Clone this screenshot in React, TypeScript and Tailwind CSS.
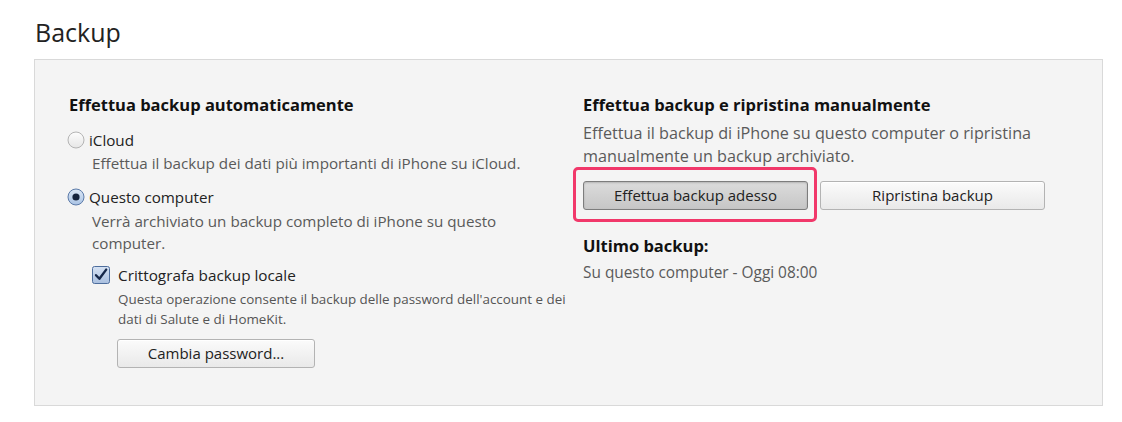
import React from "react";

const font = { fontFamily: '"Open Sans", "Noto Sans", sans-serif' };

function Radio({ checked }: { checked?: boolean }) {
  return (
    <svg width="18" height="18" viewBox="0 0 18 18" className="shrink-0">
      <defs>
        <linearGradient id={checked ? "rg1" : "rg0"} x1="0" y1="0" x2="0" y2="1">
          <stop offset="0" stopColor={checked ? "#dce8f7" : "#fdfdfd"} />
          <stop offset="1" stopColor={checked ? "#a9c2e3" : "#e6e6e6"} />
        </linearGradient>
      </defs>
      <circle cx="9" cy="9" r="8" fill={`url(#${checked ? "rg1" : "rg0"})`} stroke={checked ? "#5b7aa8" : "#b4b4b4"} strokeWidth="1" />
      {checked && <circle cx="9" cy="9" r="3.6" fill="#15243d" />}
    </svg>
  );
}

function Checkbox() {
  return (
    <svg width="18" height="18" viewBox="0 0 18 18" className="shrink-0">
      <defs>
        <linearGradient id="cbg" x1="0" y1="0" x2="0" y2="1">
          <stop offset="0" stopColor="#d6e2f3" />
          <stop offset="1" stopColor="#a9bfdf" />
        </linearGradient>
      </defs>
      <rect x="0.5" y="0.5" width="17" height="17" rx="2" fill="url(#cbg)" stroke="#4d6d9c" />
      <path d="M4 9.2 L7.4 12.8 L14.2 3.6" fill="none" stroke="#16284a" strokeWidth="2.4" strokeLinecap="round" strokeLinejoin="round" />
    </svg>
  );
}

export default function App() {
  return (
    <div className="w-[1122px] h-[422px] bg-white text-[#1a1a1a]" style={font}>
      <div className="pl-[35px] pt-[16px]">
        <div className="text-[25px] leading-[32px] text-[#222]">Backup</div>
      </div>
      <div className="ml-[34px] mt-[11px] w-[1069px] h-[347px] border border-[#d9d9d9] bg-[#f4f4f4] pt-[34px] pl-[34px] flex">
        {/* left column */}
        <div className="w-[514px] shrink-0">
          <div className="text-[16.5px] leading-[22px] font-bold text-[#111]">Effettua backup automaticamente</div>
          <div className="mt-[12px] flex items-center gap-[4px] -ml-[2px] h-[24px] text-[15.2px] text-[#222]">
            <Radio />
            <span>iCloud</span>
          </div>
          <div className="pl-[23px] text-[15.2px] leading-[22px] text-[#5a5a5a]">
            Effettua il backup dei dati più importanti di iPhone su iCloud.
          </div>
          <div className="mt-[11px] flex items-center gap-[4px] -ml-[2px] h-[24px] text-[15.2px] text-[#222]">
            <Radio checked />
            <span>Questo computer</span>
          </div>
          <div className="mt-[1px] pl-[23px] w-[460px] text-[15.2px] leading-[22px] text-[#5a5a5a]">
            Verrà archiviato un backup completo di iPhone su questo computer.
          </div>
          <div className="pl-[23px]">
            <div className="mt-[9px] flex items-center gap-[8px] h-[24px] text-[15.3px] text-[#222]">
              <Checkbox />
              <span>Crittografa backup locale</span>
            </div>
            <div className="mt-[2px] pl-[26px] w-[486px] text-[13.4px] leading-[20px] text-[#555]">
              Questa operazione consente il backup delle password dell'account e dei dati di Salute e di HomeKit.
            </div>
            <button className="mt-[10px] ml-[25px] w-[198px] h-[29px] rounded-[3px] border border-[#b3b3b3] bg-gradient-to-b from-[#fbfbfb] to-[#e9e9e9] text-[15px] text-[#222] shadow-[inset_0_1px_0_#ffffff]">
              Cambia password...
            </button>
          </div>
        </div>
        {/* right column */}
        <div className="w-[480px]">
          <div className="text-[16.5px] leading-[22px] font-bold text-[#111]">Effettua backup e ripristina manualmente</div>
          <div className="mt-[6px] w-[470px] text-[16.2px] leading-[23px] text-[#5a5a5a]">
            Effettua il backup di iPhone su questo computer o ripristina manualmente un backup archiviato.
          </div>
          <div className="mt-[13px] flex gap-[12px]">
            <div className="relative">
              <button className="w-[225px] h-[29px] rounded-[3px] border border-[#7d7d7d] bg-gradient-to-b from-[#dcdcdc] to-[#c6c6c6] text-[15px] text-[#222] shadow-[inset_0_1px_2px_rgba(0,0,0,0.18)]">
                Effettua backup adesso
              </button>
              <div className="absolute left-[-10px] top-[-14px] w-[244px] h-[55px] rounded-[5px] border-[3px] border-[#f1386a] pointer-events-none" />
            </div>
            <button className="w-[225px] h-[29px] rounded-[3px] border border-[#b3b3b3] bg-gradient-to-b from-[#fbfbfb] to-[#e9e9e9] text-[15px] text-[#222] shadow-[inset_0_1px_0_#ffffff]">
              Ripristina backup
            </button>
          </div>
          <div className="mt-[25px] text-[16.5px] leading-[22px] font-bold text-[#111]">Ultimo backup:</div>
          <div className="mt-[5px] text-[15.4px] leading-[22px] text-[#5a5a5a]">Su questo computer - Oggi 08:00</div>
        </div>
      </div>
    </div>
  );
}
